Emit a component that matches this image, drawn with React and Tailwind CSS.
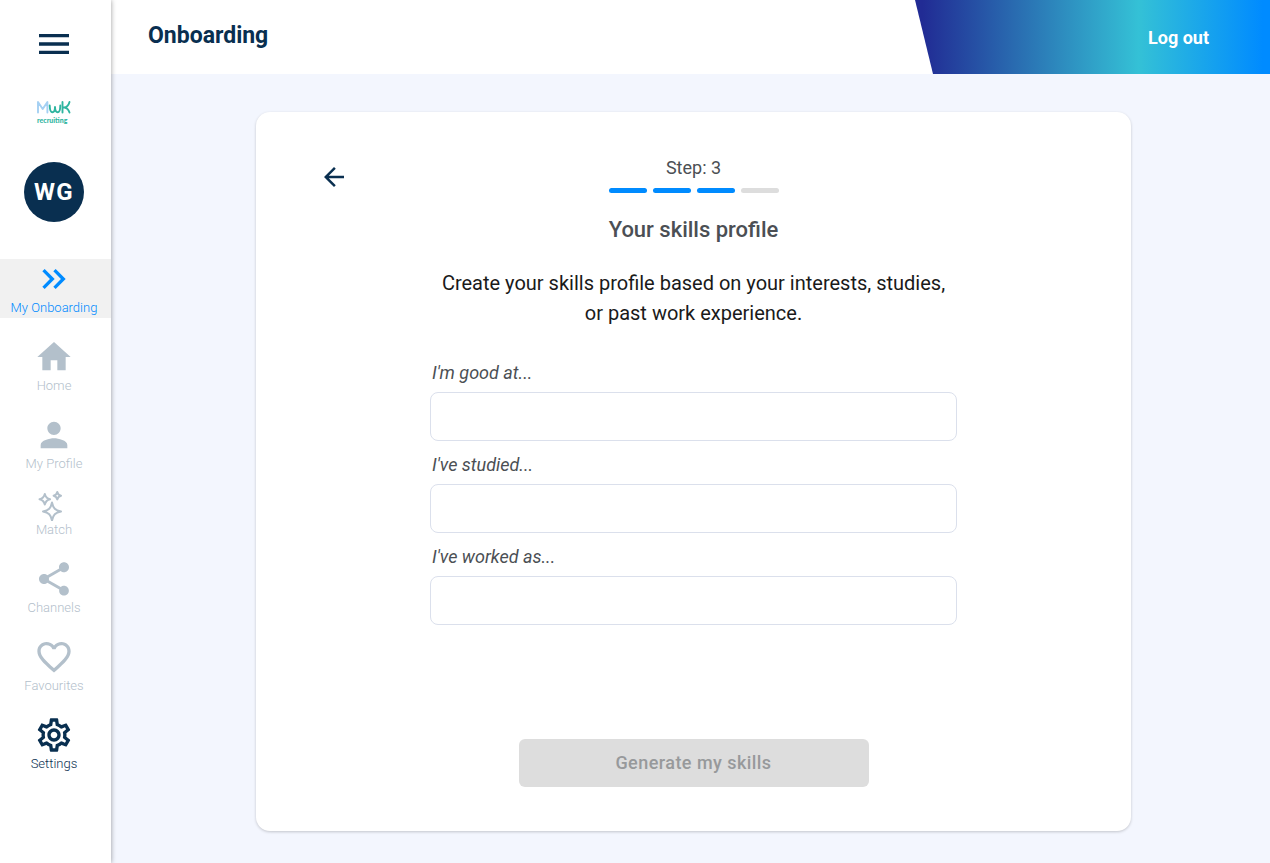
import {
  MdArrowBack,
  MdFavoriteBorder,
  MdHome,
  MdKeyboardDoubleArrowRight,
  MdMenu,
  MdOutlineSettings,
  MdPerson,
  MdShare,
} from "react-icons/md";

function SparklesIcon() {
  return (
    <svg width="30" height="30" viewBox="0 0 30 30" fill="none" stroke="currentColor" strokeWidth="2" strokeLinejoin="round" aria-hidden="true" className="-mt-0.5 mr-1">
      <path d="M15 11.500c1.200 5.800 3.200 7.800 9 9c-5.800 1.200-7.800 3.200-9 9c-1.200-5.800-3.200-7.800-9-9c5.800-1.200 7.800-3.200 9-9z" />
      <path d="M7.800 3c.8 3.400 1.900 4.500 5.300 5.300c-3.400.8-4.500 1.900-5.300 5.300c-.8-3.400-1.900-4.500-5.300-5.300c3.400-.8 4.500-1.900 5.300-5.300z" />
      <path d="M20.300 1c.6 2.500 1.300 3.200 3.700 3.700c-2.400.6-3.100 1.300-3.700 3.700c-.6-2.400-1.300-3.100-3.700-3.700c2.400-.6 3.100-1.300 3.700-3.700z" />
    </svg>
  );
}

function Logo() {
  return (
    <a href="#home" aria-label="MwK recruiting" className="flex">
      <svg width="36" height="32" viewBox="0 0 36 32" aria-hidden="true" fill="none" strokeLinecap="round" strokeLinejoin="round" strokeWidth="1.9">
        <path d="M2 16.500V6L6.700 13L11.400 6V16.500" stroke="#a5d0f3" />
        <path d="M13.700 9.500q.2 6.800 2.700 6.800t2.600-5.300q.2 5.300 2.700 5.300t2.600-6.800" stroke="#2fb5a0" />
        <path d="M26.500 6v10.500M26.500 11.500h1.500q4-.2 5.500-5.500M28.500 11.500q3.500.5 5 5" stroke="#2fb5a0" />
        <text x="1" y="27" fill="#2fb5a0" fontFamily="Lato, sans-serif" fontSize="7" fontWeight="900">recruiting</text>
      </svg>
    </a>
  );
}

const items = [
  { label: "My Onboarding", icon: <MdKeyboardDoubleArrowRight size={40} />, style: "bg-[#f1f1f1] text-[#008bff]" },
  { label: "Home", icon: <MdHome size={40} />, style: "text-[#b3c0cb]" },
  { label: "My Profile", icon: <MdPerson size={40} />, style: "text-[#b3c0cb]" },
  { label: "Match", icon: <SparklesIcon />, style: "text-[#b3c0cb]" },
  { label: "Channels", icon: <MdShare size={40} />, style: "text-[#b3c0cb]" },
  { label: "Favourites", icon: <MdFavoriteBorder size={40} />, style: "text-[#b3c0cb]" },
  { label: "Settings", icon: <MdOutlineSettings size={40} />, style: "text-[#092f50]" },
];

function Sidebar() {
  return (
    <aside className="relative z-10 flex w-[111px] shrink-0 flex-col bg-white shadow-[0_0_5px_rgba(0,0,0,0.4)]">
      <div className="flex flex-col items-center pt-6 pr-[3px]">
        <button type="button" aria-label="Menu" className="text-[#092f50]">
          <MdMenu size={40} />
        </button>
        <div className="mt-8">
          <Logo />
        </div>
        <div className="mt-[34px] flex size-[60px] items-center justify-center rounded-full bg-[#092f50] text-2xl font-bold tracking-wider text-white">
          WG
        </div>
      </div>
      <nav className="mt-[37px] flex flex-col gap-[19px]">
        {items.map((item) => (
          <a key={item.label} href="#" className={"flex flex-col items-center pr-[3px] pb-0.5 " + item.style}>
            {item.icon}
            <span className="text-[13px] leading-[17px] font-light">{item.label}</span>
          </a>
        ))}
      </nav>
    </aside>
  );
}

function Header() {
  return (
    <header className="flex h-[74px] justify-between bg-white">
      <h1 className="pt-[21px] pl-[37px] text-[23px] leading-[30px] font-bold text-[#092f50]">Onboarding</h1>
      <div className="flex w-[355px] items-center justify-end bg-[linear-gradient(90deg,#212b94_2%,#34c1d6_63%,#008bff_98%)] pt-0.5 pr-[61px] [clip-path:polygon(0_0,100%_0,100%_100%,18px_100%)]">
        <button type="button" className="text-lg font-bold text-white">Log out</button>
      </div>
    </header>
  );
}

function Field({ id, label }) {
  return (
    <div className="flex flex-col">
      <label htmlFor={id} className="pl-0.5 text-lg leading-[27px] text-[#4b4f54] italic">{label}</label>
      <input id={id} type="text" className="mt-1.5 h-[49px] rounded-lg border border-[#dbe0ec] bg-white px-3 text-lg outline-none" />
    </div>
  );
}

export default function App() {
  return (
    <div className="flex min-h-screen bg-[#f3f6fe] font-[Roboto,sans-serif]">
      <Sidebar />
      <div className="flex min-w-0 flex-1 flex-col">
        <Header />
        <main className="flex flex-1 justify-center px-6 pt-[38px] pb-8">
          <section className="mr-[-6px] flex w-full max-w-[875px] flex-col items-center self-start rounded-[14px] bg-white pt-[42px] pb-11 shadow-[0_1px_3px_rgba(0,0,0,0.2)]">
            <div className="grid w-full grid-cols-[1fr_auto_1fr] px-[63px]">
              <button type="button" aria-label="Back" className="mt-2 self-start justify-self-start text-[#092f50]">
                <MdArrowBack size={30} />
              </button>
              <div className="flex flex-col items-center">
                <p className="text-lg leading-7 text-[#4b4f54]">Step: 3</p>
                <div className="mt-1.5 flex gap-1.5">
                  <span className="h-[5px] w-[38px] rounded-full bg-[#008bff]" />
                  <span className="h-[5px] w-[38px] rounded-full bg-[#008bff]" />
                  <span className="h-[5px] w-[38px] rounded-full bg-[#008bff]" />
                  <span className="h-[5px] w-[38px] rounded-full bg-[#ddd]" />
                </div>
                <h2 className="mt-[19px] text-[22px] leading-9 font-medium text-[#4b4f54]">Your skills profile</h2>
              </div>
            </div>
            <p className="mt-5 max-w-[520px] text-center text-xl leading-[30px] text-[#1a1a1a]">
              Create your skills profile based on your interests, studies, or past work experience.
            </p>
            <form className="mt-[31px] flex w-full max-w-[527px] flex-col gap-[10px]">
              <Field id="good-at" label="I'm good at..." />
              <Field id="studied" label="I've studied..." />
              <Field id="worked-as" label="I've worked as..." />
              <button type="submit" disabled className="mt-[104px] h-12 w-[350px] self-center rounded-md bg-[#ddd] text-lg font-medium tracking-wide text-[#97999b]">
                Generate my skills
              </button>
            </form>
          </section>
        </main>
      </div>
    </div>
  );
}
